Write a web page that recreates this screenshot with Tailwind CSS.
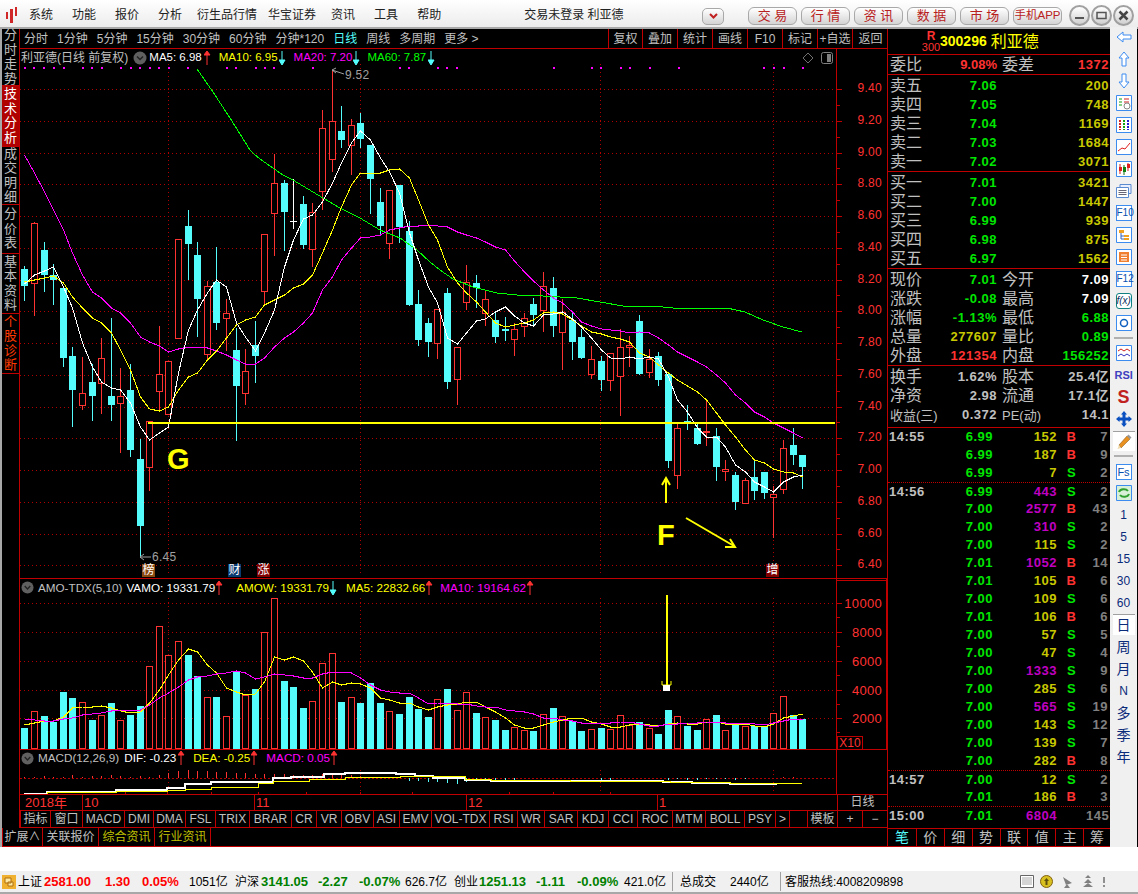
<!DOCTYPE html>
<html lang="en">

<head>
    <meta charset="UTF-8">
    <title>利亚德 300296</title>
    <script src="https://cdn.jsdelivr.net/npm/@tailwindcss/browser@4"></script>
</head>

<body class="w-[1138px] h-[894px] overflow-hidden bg-[#f0f0f0] flex flex-col text-[12px] [font-family:'Liberation_Sans','Noto_Sans_CJK_SC',sans-serif]">
    <svg class="hidden">
        <symbol id="up" viewBox="0 0 7 14"><path d="M3 14V4M3 0L0 4H6Z" stroke="#ff3232" fill="#ff3232" /></symbol>
        <symbol id="down" viewBox="0 0 7 14"><path d="M3 0V10M3 14L0 9H6Z" stroke="#54fcfc" fill="#54fcfc" /></symbol>
        <symbol id="drop" viewBox="0 0 14 14"><circle cx="7" cy="7" r="6.5" fill="#606060" /><path d="M4 5.5L7 8.5L10 5.5" stroke="#222" stroke-width="1.5" fill="none" /></symbol>
    </svg>

    <!-- title bar -->
    <header class="h-[29px] shrink-0 flex items-center pt-[3px] bg-linear-to-b from-white to-[#ececec] border-b-2 border-[#a8a8a8] text-[#222]">
        <svg class="ml-[5px] w-[13px] h-[16px]" viewBox="0 0 13 16">
            <path d="M1 5h2v7H1zM5 2h3v14H5zM10 0h2v9h-2z" fill="#d02828" />
        </svg>
        <span class="ml-[11px]">系统</span>
        <span class="ml-[19px]">功能</span>
        <span class="ml-[19px]">报价</span>
        <span class="ml-[19px]">分析</span>
        <span class="ml-[15px]">衍生品行情</span>
        <span class="ml-[11px]">华宝证券</span>
        <span class="ml-[15px]">资讯</span>
        <span class="ml-[19px]">工具</span>
        <span class="ml-[19px]">帮助</span>
        <span class="ml-[83px]">交易未登录 利亚德</span>
        <div class="ml-auto flex items-center pr-[4px]">
            <div class="mt-[2px] w-[22px] h-[17px] rounded-[5px] border border-[#a8a8a8] bg-linear-to-b from-white to-[#d4d4d4] flex items-center justify-center">
                <svg class="w-[9px] h-[6px]" viewBox="0 0 9 6"><path d="M1 1L4.500 4.500L8 1" stroke="#c02020" stroke-width="2" fill="none" /></svg>
            </div>
            <div class="mt-[2px] ml-[24px] flex gap-[4px] text-[#b82020] text-[13px]">
                <div class="w-[49px] h-[18px] rounded-[6px] border border-[#a8a8a8] bg-linear-to-b from-white to-[#d4d4d4] flex items-center justify-center">交 易</div>
                <div class="w-[49px] h-[18px] rounded-[6px] border border-[#a8a8a8] bg-linear-to-b from-white to-[#d4d4d4] flex items-center justify-center">行 情</div>
                <div class="w-[49px] h-[18px] rounded-[6px] border border-[#a8a8a8] bg-linear-to-b from-white to-[#d4d4d4] flex items-center justify-center">资 讯</div>
                <div class="w-[49px] h-[18px] rounded-[6px] border border-[#a8a8a8] bg-linear-to-b from-white to-[#d4d4d4] flex items-center justify-center">数 据</div>
                <div class="w-[49px] h-[18px] rounded-[6px] border border-[#a8a8a8] bg-linear-to-b from-white to-[#d4d4d4] flex items-center justify-center">市 场</div>
                <div class="w-[49px] h-[18px] rounded-[6px] border border-[#a8a8a8] bg-linear-to-b from-white to-[#d4d4d4] flex items-center justify-center text-[11.500px] whitespace-nowrap">手机APP</div>
            </div>
            <div class="ml-[7px] flex gap-px">
                <div class="w-[21px] h-[21px] rounded-full border-2 border-[#a0a0a0] bg-linear-to-b from-white to-[#d0d0d0] flex items-center justify-center">
                    <svg class="w-[11px] h-[11px]" viewBox="0 0 11 11"><path d="M1 8h9" stroke="#555" stroke-width="2" /></svg>
                </div>
                <div class="w-[21px] h-[21px] rounded-full border-2 border-[#a0a0a0] bg-linear-to-b from-white to-[#d0d0d0] flex items-center justify-center">
                    <svg class="w-[11px] h-[11px]" viewBox="0 0 11 11"><path d="M1 2.500h9v6h-9z" stroke="#555" stroke-width="1.500" fill="none" /></svg>
                </div>
                <div class="w-[21px] h-[21px] rounded-full border-2 border-[#a0a0a0] bg-linear-to-b from-white to-[#d0d0d0] flex items-center justify-center">
                    <svg class="w-[11px] h-[11px]" viewBox="0 0 11 11"><path d="M1.500 1.500l8 8M9.500 1.500l-8 8" stroke="#444" stroke-width="2.500" /></svg>
                </div>
            </div>
        </div>
    </header>

    <div class="h-[818px] shrink-0 flex bg-black">
        <div class="w-[888px] ml-0 flex flex-col border-l-2 border-[#a8a8a8]">
            <div class="h-[799px] flex">
                <!-- vertical tabs -->
                <nav class="w-[18px] shrink-0 flex flex-col border-r border-[#c00000] text-[#c0c0c0] text-[13px] leading-[14.5px]">
                    <div class="h-[57px] border-b border-[#c00000] flex items-center justify-center"><span class="w-[13px] break-all">分时走势</span></div>
                    <div class="h-[61px] border-b border-[#c00000] bg-[#b00000] text-white flex items-center justify-center"><span class="w-[13px] break-all">技术分析</span></div>
                    <div class="h-[58px] border-b border-[#c00000] flex items-center justify-center"><span class="w-[13px] break-all">成交明细</span></div>
                    <div class="h-[49px] border-b border-[#c00000] flex items-center justify-center"><span class="w-[13px] break-all">分价表</span></div>
                    <div class="h-[60px] border-b border-[#c00000] flex items-center justify-center"><span class="w-[13px] break-all">基本资料</span></div>
                    <div class="h-[60px] border-b border-[#c00000] text-[#ff3a00] flex items-center justify-center"><span class="w-[13px] break-all">个股诊断</span></div>
                </nav>

                <main class="w-[868px] flex flex-col">
                    <!-- period toolbar -->
                    <div class="h-[20px] shrink-0 flex items-center border-b border-[#c00000] text-[#c0c0c0]">
                        <div class="flex items-center gap-[9px] pl-[4px]">
                            <span>分时</span><span>1分钟</span><span>5分钟</span><span>15分钟</span><span>30分钟</span><span>60分钟</span><span>分钟*120</span>
                            <span class="text-[#54fcfc]">日线</span><span>周线</span><span>多周期</span><span>更多 &gt;</span>
                        </div>
                        <div class="ml-auto flex h-full">
                            <span class="w-[34px] border-l border-[#c00000] flex items-center justify-center">复权</span>
                            <span class="w-[35px] border-l border-[#c00000] flex items-center justify-center">叠加</span>
                            <span class="w-[35px] border-l border-[#c00000] flex items-center justify-center">统计</span>
                            <span class="w-[35px] border-l border-[#c00000] flex items-center justify-center">画线</span>
                            <span class="w-[35px] border-l border-[#c00000] flex items-center justify-center">F10</span>
                            <span class="w-[35px] border-l border-[#c00000] flex items-center justify-center">标记</span>
                            <span class="w-[35px] border-l border-[#c00000] flex items-center justify-center">+自选</span>
                            <span class="w-[36px] border-l border-[#c00000] flex items-center justify-center">返回</span>
                        </div>
                    </div>

                    <!-- main chart -->
                    <section class="relative h-[530px] shrink-0">
                        <svg id="kline" class="block" width="868" height="530" viewBox="20 49 868 530"></svg>
                        <div class="absolute left-px top-0 h-[17px] flex items-center text-[#c0c0c0]">
                            <span>利亚德(日线 前复权)</span>
                            <svg class="ml-[5px] w-[14px] h-[14px]"><use href="#drop" /></svg>
                            <span class="ml-[2px] text-[11.500px] text-white">MA5: 6.98</span><svg class="ml-[2px] w-[7px] h-[14px]"><use href="#up" /></svg>
                            <span class="ml-[8px] text-[11.500px] text-[#ffff00]">MA10: 6.95</span><svg class="ml-[1px] w-[7px] h-[14px]"><use href="#down" /></svg>
                            <span class="ml-[8px] text-[11.500px] text-[#ff00ff]">MA20: 7.20</span><svg class="ml-[1px] w-[7px] h-[14px]"><use href="#down" /></svg>
                            <span class="ml-[7px] text-[11.500px] text-[#00ff00]">MA60: 7.87</span><svg class="ml-[2px] w-[7px] h-[14px]"><use href="#down" /></svg>
                        </div>
                        <span class="absolute left-[147px] top-[393px] font-bold text-[#ffff00] text-[29px] leading-[34px]">G</span>
                        <span class="absolute left-[637px] top-[469px] font-bold text-[#ffff00] text-[29px] leading-[34px]">F</span>
                        <span class="absolute left-[122px] top-[515px] w-[13px] h-[13px] bg-[#8a4a10] text-white text-[12px] leading-[13px] text-center">榜</span>
                        <span class="absolute left-[208px] top-[515px] w-[13px] h-[13px] bg-[#0a3a70] text-white text-[12px] leading-[13px] text-center">财</span>
                        <span class="absolute left-[237px] top-[515px] w-[13px] h-[13px] bg-[#800000] text-white text-[12px] leading-[13px] text-center">涨</span>
                        <span class="absolute left-[746px] top-[515px] w-[13px] h-[13px] bg-[#800000] text-white text-[12px] leading-[13px] text-center">增</span>
                    </section>

                    <!-- amount panel -->
                    <section class="relative h-[171px] shrink-0">
                        <svg id="amo" class="block" width="868" height="171" viewBox="20 579 868 171"></svg>
                        <div class="absolute left-0 top-0 h-[17px] pl-[1px] flex items-center text-[11.700px] text-[#c0c0c0]">
                            <svg class="w-[13px] h-[13px]"><use href="#drop" /></svg>
                            <span class="ml-[4px]">AMO-TDX(5,10)</span>
                            <span class="ml-[4px] text-white">VAMO: 19331.79</span><svg class="ml-[1px] w-[7px] h-[14px]"><use href="#up" /></svg>
                            <span class="ml-[13px] text-[#ffff00]">AMOW: 19331.79</span><svg class="ml-[1px] w-[7px] h-[14px]"><use href="#down" /></svg>
                            <span class="ml-[9px] text-[#ffff00]">MA5: 22832.66</span><svg class="ml-[1px] w-[7px] h-[14px]"><use href="#up" /></svg>
                            <span class="ml-[7px] text-[#ff00ff]">MA10: 19164.62</span><svg class="ml-[1px] w-[7px] h-[14px]"><use href="#up" /></svg>
                        </div>
                        <span class="absolute left-[817px] top-[157px] w-[26px] h-[14px] border border-[#c00000] text-[#ff3232] leading-[12px] text-center">X10</span>
                    </section>

                    <!-- macd panel -->
                    <section class="relative h-[45px] shrink-0">
                        <svg id="macd" class="block" width="868" height="45" viewBox="20 750 868 45"></svg>
                        <div class="absolute left-0 top-0 h-[16px] pl-[1px] flex items-center text-[11.700px] text-[#c0c0c0]">
                            <svg class="w-[13px] h-[13px]"><use href="#drop" /></svg>
                            <span class="ml-[4px]">MACD(12,26,9)</span>
                            <span class="ml-[5px] text-white">DIF: -0.23</span><svg class="ml-[2px] w-[7px] h-[14px]"><use href="#up" /></svg>
                            <span class="ml-[8px] text-[#ffff00]">DEA: -0.25</span><svg class="ml-[1px] w-[7px] h-[14px]"><use href="#up" /></svg>
                            <span class="ml-[8px] text-[#ff00ff]">MACD: 0.05</span><svg class="ml-[1px] w-[7px] h-[14px]"><use href="#up" /></svg>
                        </div>
                    </section>

                    <!-- date axis -->
                    <div class="h-[16px] shrink-0 flex border-b border-[#c00000] text-[#ff3232] text-[13px] leading-[15px]">
                        <span class="w-[62px] pl-[5px]">2018年</span>
                        <span class="w-[172px] border-l border-[#c00000] pl-[1px]">10</span>
                        <span class="w-[212px] border-l border-[#c00000] pl-[1px]">11</span>
                        <span class="w-[191px] border-l border-[#c00000] pl-[1px]">12</span>
                        <span class="w-[180px] border-l border-[#c00000] pl-[1px]">1</span>
                        <span class="w-[50px] border-l border-[#c00000] text-center text-[#c0c0c0] text-[12px]">日线</span>
                    </div>

                    <!-- indicator tabs -->
                    <div class="h-[17px] shrink-0 flex border-b border-[#c00000] text-[#c0c0c0] leading-[16px] text-center">
                        <span class="w-[30px] border-l border-[#c00000]">指标</span>
                        <span class="w-[32px] border-l border-[#c00000]">窗口</span>
                        <span class="w-[42px] border-l border-[#c00000]">MACD</span>
                        <span class="w-[29px] border-l border-[#c00000]">DMI</span>
                        <span class="w-[32px] border-l border-[#c00000]">DMA</span>
                        <span class="w-[30px] border-l border-[#c00000]">FSL</span>
                        <span class="w-[34px] border-l border-[#c00000]">TRIX</span>
                        <span class="w-[42px] border-l border-[#c00000]">BRAR</span>
                        <span class="w-[25px] border-l border-[#c00000]">CR</span>
                        <span class="w-[25px] border-l border-[#c00000]">VR</span>
                        <span class="w-[32px] border-l border-[#c00000]">OBV</span>
                        <span class="w-[26px] border-l border-[#c00000]">ASI</span>
                        <span class="w-[32px] border-l border-[#c00000]">EMV</span>
                        <span class="w-[58px] border-l border-[#c00000]">VOL-TDX</span>
                        <span class="w-[28px] border-l border-[#c00000]">RSI</span>
                        <span class="w-[27px] border-l border-[#c00000]">WR</span>
                        <span class="w-[33px] border-l border-[#c00000]">SAR</span>
                        <span class="w-[31px] border-l border-[#c00000]">KDJ</span>
                        <span class="w-[29px] border-l border-[#c00000]">CCI</span>
                        <span class="w-[35px] border-l border-[#c00000]">ROC</span>
                        <span class="w-[33px] border-l border-[#c00000]">MTM</span>
                        <span class="w-[39px] border-l border-[#c00000]">BOLL</span>
                        <span class="w-[31px] border-l border-[#c00000]">PSY</span>
                        <span class="w-[14px] border-l border-[#c00000]">&gt;</span>
                        <span class="w-[18px] border-l border-[#c00000]"></span>
                        <span class="w-[30px] border-l border-[#c00000]">模板</span>
                        <span class="w-[25px] border-l border-[#c00000]">+</span>
                        <span class="w-[26px] border-x border-[#c00000]">−</span>
                    </div>
                </main>
            </div>

            <!-- bottom tabs -->
            <div class="h-[19px] flex border-y-0 border-b border-[#c00000] text-[#c0c0c0] leading-[18px] text-center">
                <span class="w-[41px] border-x border-[#c00000]">扩展∧</span>
                <span class="w-[56px] border-r border-[#c00000]">关联报价</span>
                <span class="w-[56px] border-r border-[#c00000] text-[#c0c000]">综合资讯</span>
                <span class="w-[56px] border-r border-[#c00000] text-[#c0c000]">行业资讯</span>
            </div>
        </div>

        <!-- quote panel -->
        <aside class="w-[223px] shrink-0 flex flex-col border-l border-[#c00000] -ml-px text-[#c0c0c0]">
            <div class="h-[26px] shrink-0 flex items-center border-b border-[#c00000] text-[#ffff00]">
                <div class="ml-[35px] w-[16px] flex flex-col items-center text-[#ff3232] leading-[11px]">
                    <b class="text-[12px]">R</b><span class="text-[11px]">300</span>
                </div>
                <b class="ml-[1px] text-[14px]">300296</b>
                <span class="ml-[4px] text-[16px]">利亚德</span>
            </div>
            <div class="h-[20px] shrink-0 flex items-center border-b border-[#c00000] pl-[2px] text-[16px]">
                <span class="w-[32px] shrink-0 whitespace-nowrap">委比</span>
                <b class="w-[75px] shrink-0 text-right text-[13px] text-[#ff3232]">9.08%</b>
                <span class="ml-[5px] w-[32px] shrink-0 whitespace-nowrap">委差</span>
                <b class="w-[75px] shrink-0 text-right text-[13px] text-[#ff3232] tracking-[.5px]">1372</b>
            </div>
            <div id="book" class="contents"></div>
            <div id="ticks" class="h-[400px] shrink-0 flex flex-col"></div>
            <div class="h-[19px] shrink-0 flex border-y border-[#c00000] text-[14px] leading-[16px] text-center">
                <span class="w-[28px] text-[#54fcfc]">笔</span>
                <span class="w-[28px] border-l border-[#c00000]">价</span>
                <span class="w-[28px] border-l border-[#c00000]">细</span>
                <span class="w-[28px] border-l border-[#c00000]">势</span>
                <span class="w-[28px] border-l border-[#c00000]">联</span>
                <span class="w-[28px] border-l border-[#c00000]">值</span>
                <span class="w-[28px] border-l border-[#c00000]">主</span>
                <span class="w-[27px] border-l border-[#c00000]">筹</span>
            </div>
        </aside>

        <!-- tool strip -->
        <div class="w-[27px] shrink-0 -mt-[2px] bg-[#f0f0f0] flex flex-col items-center pt-[2px] text-[#0a2a7a]">
            <div class="flex flex-col items-center gap-[6px]">
                <svg class="w-[16px] h-[16px]" viewBox="0 0 16 16"><path d="M1 8L7 3V6H15V10H7V13Z" fill="#fff" stroke="#3c8cf0" /></svg>
                <svg class="w-[16px] h-[16px]" viewBox="0 0 16 16"><path d="M8 1L13 7H10V15H6V7H3Z" fill="#fff" stroke="#3c8cf0" /></svg>
                <svg class="w-[16px] h-[16px]" viewBox="0 0 16 16"><path d="M8 15L13 9H10V1H6V9H3Z" fill="#fff" stroke="#3c8cf0" /></svg>
                <svg class="w-[16px] h-[16px]" viewBox="0 0 16 16"><path d="M.500.500h15v15H.500z" fill="#fff" stroke="#3c8cf0" /><path d="M3 4h3M3 7h3M3 10h3" stroke="#10a010" /><path d="M8 4h5M8 7h5" stroke="#d02020" /><circle cx="11" cy="11" r="3" fill="#fff" stroke="#888" /></svg>
                <svg class="w-[16px] h-[16px]" viewBox="0 0 16 16"><path d="M.500.500h15v15H.500z" fill="#fff" stroke="#3c8cf0" /><path d="M4 3v10" stroke="#d02020" stroke-width="2" stroke-dasharray="2 1" /><path d="M8 3v10" stroke="#10a010" stroke-width="2" stroke-dasharray="2 1" /><path d="M12 3v10" stroke="#2020d0" stroke-width="2" stroke-dasharray="2 1" /></svg>
                <svg class="w-[16px] h-[16px]" viewBox="0 0 16 16"><path d="M.500.500h15v15H.500z" fill="#fff" stroke="#3c8cf0" /><path d="M2 12L6 9L9 10L14 4" stroke="#e02020" fill="none" /></svg>
                <svg class="w-[16px] h-[16px]" viewBox="0 0 16 16"><path d="M.500.500h15v15H.500z" fill="#fff" stroke="#3c8cf0" /><path d="M4 3v10M12 2v8" stroke="#d02020" /><path d="M3 6h3v4H3zM11 3h3v4h-3z" fill="#e02020" /><path d="M8 4v10" stroke="#107010" /><path d="M7 6h3v5H7z" fill="#108010" /></svg>
                <svg class="w-[16px] h-[16px]" viewBox="0 0 16 16"><path d="M4 1.500h11v9H4z" fill="#e8f0ff" stroke="#5a8ad0" /><path d="M.500 4.500h12v10H.500z" fill="#fff" stroke="#5a8ad0" /><path d="M2.500 7.500h8M2.500 9.500h8M2.500 11.500h8" stroke="#667" /></svg>
                <div class="w-[16px] h-[16px] border border-[#3c8cf0] bg-white text-[#0a50b0] text-[10px] leading-[14px] text-center">F10</div>
                <svg class="w-[16px] h-[16px]" viewBox="0 0 16 16"><path d="M.500.500h15v15H.500z" fill="#fff" stroke="#3c8cf0" /><path d="M3 3h5v3H3zM8 8h5v2H8zM8 11h5v2H8z" fill="#f0a020" /><path d="M5 6v6h3M5 9h3" stroke="#3060c0" fill="none" /></svg>
                <svg class="w-[16px] h-[16px]" viewBox="0 0 16 16"><path d="M.500.500h15v15H.500z" fill="#fff" stroke="#3c8cf0" /><path d="M3 3h10v10H3z" fill="#f08030" /><path d="M5 6h6M5 8.500h6M5 11h6" stroke="#fff" /></svg>
                <div class="w-[16px] h-[16px] border border-[#3c8cf0] bg-white text-[#0a50b0] text-[10px] leading-[14px] text-center">F12</div>
                <div class="w-[16px] h-[16px] rounded-[3px] border border-[#108080] bg-white text-[#0a3060] text-[10px] leading-[14px] text-center italic">f(x)</div>
                <svg class="w-[16px] h-[16px]" viewBox="0 0 16 16"><path d="M.500.500h15v15H.500z" fill="#fff" stroke="#3c8cf0" /><circle cx="8" cy="8" r="3.500" fill="none" stroke="#1060c0" stroke-width="1.500" /></svg>
            </div>
            <div class="my-[6px] w-[19px] h-[2px] bg-[#b0b0b0]"></div>
            <div class="flex flex-col items-center gap-[6px]">
                <svg class="w-[16px] h-[16px]" viewBox="0 0 16 16"><path d="M.500.500h15v15H.500z" fill="#fff" stroke="#3c8cf0" /><path d="M2 6L5 4L8 6L11 4L14 6" stroke="#d02020" fill="none" /><path d="M2 11L5 9L8 11L11 9L14 11" stroke="#3030c0" fill="none" /></svg>
                <div class="w-[18px] h-[16px] text-[#4040c0] font-bold text-[11px] leading-[16px] text-center">RSI</div>
                <div class="w-[16px] h-[16px] text-[#c02020] font-bold text-[18px] leading-[16px] text-center">S</div>
                <svg class="w-[16px] h-[16px]" viewBox="0 0 16 16"><path d="M8 0L11 3.500H9.500V6.500H12.500V5L16 8L12.500 11V9.500H9.500V12.500H11L8 16L5 12.500H6.500V9.500H3.500V11L0 8L3.500 5V6.500H6.500V3.500H5Z" fill="#0a50c0" /></svg>
            </div>
            <div class="mt-[4px] w-[22px] h-[20px] bg-white border-t border-[#a0a0a0] flex items-center justify-center">
                <svg class="w-[16px] h-[16px]" viewBox="0 0 16 16"><path d="M3 11L11 2L14 5L5 14Z" fill="#e89020" stroke="#805010" stroke-width=".5" /><path d="M3 11L1.500 15L5 14Z" fill="#f0d8a8" /><path d="M11 2L12.500 .5L15.500 3.500L14 5Z" fill="#999" /></svg>
            </div>
            <div class="mt-[4px] w-[19px] h-[2px] bg-[#b0b0b0]"></div>
            <div class="mt-[7px] w-[16px] h-[16px] border border-[#3c8cf0] bg-white text-[#0a50b0] text-[11px] leading-[14px] text-center">Fs</div>
            <svg class="mt-[5px] w-[16px] h-[16px]" viewBox="0 0 16 16"><path d="M.500.500h15v15H.500z" fill="#d8f0d8" stroke="#3c8cf0" /><path d="M3 7a5 4 0 0 1 9-1M13 9a5 4 0 0 1-9 1" stroke="#30a030" stroke-width="2" fill="none" /></svg>
            <div class="mt-[6px] flex flex-col items-center">
                <span class="h-[22px] leading-[16px]">1</span>
                <span class="h-[22px] leading-[16px]">5</span>
                <span class="h-[22px] leading-[16px]">15</span>
                <span class="h-[22px] leading-[16px]">30</span>
                <span class="h-[22px] leading-[16px]">60</span>
            </div>
            <div class="-mt-[3px] w-[22px] h-[21px] bg-white border-t border-[#a0a0a0] text-center text-[14px] leading-[20px]">日</div>
            <div class="mt-[2px] flex flex-col items-center text-[14px]">
                <span class="h-[22px] leading-[20px]">周</span>
                <span class="h-[22px] leading-[20px]">月</span>
                <span class="h-[22px] leading-[20px] text-[12px]">N</span>
                <span class="h-[22px] leading-[20px]">多</span>
                <span class="h-[22px] leading-[20px]">季</span>
                <span class="h-[22px] leading-[20px]">年</span>
            </div>
        </div>
    </div>

    <div class="h-[24px] shrink-0 bg-white"></div>

    <!-- status bar -->
    <footer class="h-[23px] shrink-0 flex items-center border-b-2 border-[#a8a8a8] bg-[#f0f0f0] text-black">
        <svg class="ml-[2px] w-[14px] h-[14px]" viewBox="0 0 14 14"><path d="M0 0h14v14H0z" fill="#f0b030" /><path d="M3 3h6v5H3zM6 7h5v4H6z" fill="#ffe8a0" stroke="#b07010" /></svg>
        <span class="ml-[2px] w-[26px]">上证</span>
        <b class="w-[61px] text-[13px] text-[#ff0000]">2581.00</b>
        <b class="w-[37px] text-[13px] text-[#ff0000]">1.30</b>
        <b class="w-[47px] text-[13px] text-[#ff0000]">0.05%</b>
        <span class="w-[46px]">1051亿</span>
        <span class="w-[26px]">沪深</span>
        <b class="w-[57px] text-[13px] text-[#008000]">3141.05</b>
        <b class="w-[41px] text-[13px] text-[#008000]">-2.27</b>
        <b class="w-[46px] text-[13px] text-[#008000]">-0.07%</b>
        <span class="w-[49px]">626.7亿</span>
        <span class="w-[25px]">创业</span>
        <b class="w-[57px] text-[13px] text-[#008000]">1251.13</b>
        <b class="w-[41px] text-[13px] text-[#008000]">-1.11</b>
        <b class="w-[47px] text-[13px] text-[#008000]">-0.09%</b>
        <span class="w-[48px]">421.0亿</span>
        <span class="w-[8px] h-[19px] border-l border-[#a0a0a0]"></span>
        <span class="w-[50px]">总成交</span>
        <span class="w-[50px]">2440亿</span>
        <span class="w-[5px] h-[19px] border-l border-[#a0a0a0]"></span>
        <span class="whitespace-nowrap">客服热线:4008209898</span>
        <div class="ml-auto mr-[32px] flex items-center gap-[6px]">
            <svg class="w-[14px] h-[13px]" viewBox="0 0 14 13"><path d="M.500.500h13v12H.500z" fill="#fff" stroke="#666" /><path d="M2 3h10M2 5h10M2 7h10M2 9h10" stroke="#aaa" /></svg>
            <svg class="w-[13px] h-[13px]" viewBox="0 0 13 13"><circle cx="6.500" cy="6.500" r="6" fill="#d8c020" stroke="#806010" /><path d="M6.500 3L9 6H7.500V10H5.500V6H4Z" fill="#605010" /></svg>
            <svg class="ml-[3px] w-[12px] h-[13px]" viewBox="0 0 12 13"><path d="M1 2L10 8L4 10ZM5 9L2 13H8Z" fill="#808080" /></svg>
            <svg class="ml-[3px] w-[10px] h-[13px]" viewBox="0 0 10 13"><path d="M5 0L8 3H2ZM5 4L9 8H1ZM5 8L10 12H0Z" fill="#808080" /></svg>
            <svg class="ml-[3px] w-[4px] h-[10px]" viewBox="0 0 4 10"><path d="M1 0h2v6H1zM1 8h2v2H1z" fill="#909090" /></svg>
        </div>
    </footer>

    <script>
        const RED = '#ff3232', CYAN = '#54fcfc', DOT = '#b00000', LINE = '#c00000';
        const X = i => Math.round(24.3 + 9.605 * i);

        // [wick top, body top, body bottom, wick bottom, up?]  in screen pixels
        const candles = [
            [266, 269, 286, 300, 0], [222, 223, 283, 315, 1], [242, 250, 275, 291, 0], [264, 275, 280, 304, 0], [288, 288, 358, 366, 0], [347, 356, 390, 426, 0],
            [357, 393, 405, 409, 1], [364, 382, 396, 420, 0], [338, 358, 383, 413, 1], [318, 396, 405, 420, 0], [368, 396, 403, 452, 1], [364, 390, 450, 456, 0],
            [439, 459, 526, 557, 0], [421, 421, 467, 490, 1], [326, 374, 391, 410, 1], [361, 361, 414, 414, 1], [239, 239, 338, 338, 1], [210, 226, 244, 279, 0],
            [242, 255, 299, 336, 0], [281, 286, 354, 360, 1], [247, 282, 323, 329, 0], [299, 313, 318, 350, 1], [328, 350, 386, 440, 0], [349, 371, 393, 404, 1],
            [321, 345, 356, 382, 0], [234, 234, 291, 305, 1], [154, 183, 213, 255, 1], [180, 183, 212, 250, 0], [179, 221, 221, 228, 2], [196, 204, 245, 248, 0],
            [203, 212, 249, 266, 1], [110, 128, 191, 209, 1], [70, 121, 159, 171, 1], [106, 131, 140, 147, 0], [119, 125, 145, 174, 1], [113, 123, 139, 147, 0],
            [145, 145, 179, 213, 0], [188, 202, 226, 234, 0], [190, 190, 243, 258, 1], [185, 185, 227, 242, 0], [221, 231, 305, 305, 0], [290, 304, 340, 345, 0],
            [318, 323, 342, 356, 0], [309, 309, 343, 358, 1], [288, 293, 382, 388, 0], [347, 347, 379, 404, 1], [265, 282, 302, 309, 1], [275, 283, 288, 307, 0],
            [290, 299, 313, 325, 1], [311, 320, 337, 342, 0], [317, 329, 331, 340, 0], [323, 329, 339, 355, 1], [313, 318, 326, 336, 1], [298, 304, 315, 325, 0],
            [272, 286, 310, 331, 1], [277, 288, 326, 336, 0], [299, 312, 332, 369, 1], [312, 320, 342, 359, 0], [329, 337, 358, 358, 0], [346, 359, 374, 378, 1],
            [356, 361, 380, 390, 0], [353, 353, 380, 390, 1], [329, 347, 376, 415, 1], [336, 345, 347, 366, 1], [315, 321, 374, 374, 0], [349, 359, 372, 377, 1],
            [352, 356, 380, 385, 0], [374, 374, 461, 467, 0], [422, 428, 475, 488, 1], [405, 421, 423, 429, 0], [422, 428, 444, 444, 0], [399, 431, 433, 445, 3],
            [428, 436, 467, 480, 0], [460, 469, 471, 480, 1], [472, 475, 502, 509, 0], [478, 480, 503, 503, 1], [460, 477, 491, 499, 0], [472, 472, 493, 498, 0],
            [486, 494, 497, 537, 1], [440, 448, 489, 493, 1], [428, 445, 455, 464, 0], [455, 455, 467, 488, 0]
        ];
        const ma5 = [284, 275, 271, 267, 287, 308, 343, 367, 382, 388, 390, 403, 427, 440, 433, 427, 373, 330, 310, 293, 280, 287, 323, 337, 351, 333, 310, 267, 240, 219, 215, 202, 183, 163, 143, 131, 140, 158, 172, 193, 233, 260, 287, 303, 338, 344, 333, 321, 319, 312, 307, 316, 323, 326, 315, 314, 312, 319, 327, 338, 350, 358, 359, 357, 359, 357, 359, 377, 400, 412, 428, 437, 437, 447, 465, 472, 482, 487, 492, 482, 477, 475];
        const ma10 = [282, 280, 278, 276, 283, 297, 308, 318, 323, 333, 350, 370, 397, 409, 411, 407, 390, 377, 373, 360, 351, 338, 325, 320, 317, 305, 300, 295, 288, 284, 275, 253, 230, 207, 185, 173, 173, 173, 170, 169, 178, 200, 225, 240, 267, 283, 293, 302, 312, 323, 327, 325, 323, 320, 313, 312, 314, 320, 326, 332, 334, 337, 339, 342, 353, 357, 365, 373, 380, 386, 392, 400, 413, 425, 437, 450, 460, 463, 469, 472, 473, 477];
        const ma20 = [155, 173, 192, 210, 230, 253, 275, 292, 298, 308, 313, 323, 337, 342, 346, 352, 349, 347, 347, 348, 351, 355, 360, 364, 364, 358, 347, 338, 332, 323, 313, 290, 277, 260, 248, 238, 237, 235, 230, 228, 226, 226, 225, 226, 227, 232, 235, 238, 242, 247, 250, 261, 272, 281, 290, 298, 303, 312, 322, 326, 329, 330, 331, 333, 332, 333, 338, 345, 352, 357, 362, 367, 375, 383, 395, 403, 412, 417, 423, 428, 433, 438];
        const ma60 = [[197, 69], [213, 92], [230, 118], [250, 150], [255, 155], [267, 164], [283, 175], [293, 180], [313, 192], [323, 198], [340, 208], [360, 218], [380, 230], [400, 238], [417, 250], [430, 262], [440, 270], [453, 279], [473, 287], [497, 293], [517, 295], [543, 296], [577, 298], [600, 302], [623, 306], [653, 306], [673, 308], [700, 309], [727, 308], [745, 312], [763, 320], [783, 327], [802, 332]];

        const volTop = [728, 711, 716, 722, 692, 698, 702, 720, 715, 703, 720, 715, 706, 666, 626, 655, 641, 655, 676, 697, 697, 716, 672, 695, 689, 632, 598, 681, 687, 708, 701, 663, 653, 702, 697, 703, 683, 703, 711, 714, 697, 709, 717, 699, 689, 710, 692, 713, 717, 720, 730, 727, 730, 731, 714, 708, 716, 721, 731, 729, 728, 729, 715, 725, 722, 728, 734, 710, 716, 726, 730, 719, 715, 730, 725, 726, 726, 727, 713, 696, 715, 719];
        const volUp = [0, 1, 0, 0, 0, 0, 1, 0, 1, 0, 1, 0, 0, 1, 1, 1, 1, 0, 0, 1, 0, 1, 0, 1, 0, 1, 1, 0, 0, 0, 1, 1, 1, 0, 1, 0, 0, 0, 1, 0, 0, 0, 0, 1, 0, 1, 1, 0, 1, 0, 0, 1, 1, 0, 1, 0, 1, 0, 0, 1, 0, 1, 1, 1, 0, 1, 0, 0, 1, 0, 0, 1, 0, 1, 0, 1, 0, 0, 1, 1, 0, 0];
        const volMa5 = [725, 723, 721, 721, 717, 708, 707, 707, 706, 708, 711, 713, 712, 703, 690, 675, 660, 649, 652, 665, 673, 688, 692, 695, 694, 682, 657, 660, 657, 661, 672, 688, 682, 685, 683, 684, 688, 698, 700, 703, 703, 707, 710, 707, 705, 704, 702, 702, 707, 712, 718, 725, 728, 728, 725, 722, 720, 718, 718, 722, 724, 727, 727, 725, 724, 725, 726, 724, 723, 724, 724, 722, 722, 724, 724, 724, 726, 727, 724, 718, 716, 714];
        const volMa10 = [719, 720, 721, 721, 719, 718, 715, 714, 713, 711, 710, 710, 710, 705, 698, 693, 687, 680, 677, 676, 674, 673, 671, 673, 679, 677, 674, 675, 676, 678, 678, 674, 672, 672, 673, 678, 685, 690, 692, 693, 693, 698, 704, 703, 703, 704, 704, 706, 707, 707, 710, 711, 712, 714, 718, 718, 720, 721, 723, 723, 723, 723, 722, 722, 724, 726, 726, 724, 724, 723, 723, 722, 722, 723, 723, 723, 724, 725, 723, 721, 719, 719];

        const macdWhite = [[24, 794], [47, 792], [116, 790], [153, 790], [167, 788], [185, 784], [211, 782], [258, 782], [273, 778], [291, 777], [324, 774], [345, 773], [375, 773], [396, 774], [415, 776], [433, 778], [465, 780], [491, 781], [538, 781], [597, 781], [663, 782], [692, 783], [730, 784], [777, 784]];
        const macdYellow = [[24, 794], [47, 792], [116, 791], [153, 791], [167, 790], [185, 789], [211, 787], [258, 783], [273, 781], [309, 779], [345, 777], [400, 776], [433, 776], [465, 779], [491, 780], [570, 781], [670, 782], [730, 783], [802, 783]];
        const macdBars = [1, 1, 2, 1, 1, 3, 1, 2, 2, 3, 2, 1, 2, 1, 3, 5, 7, 8, 7, 7, 6, 6, 5, 5, 4, 4, 4, 4, 3, 3, 3, 4, 4, 3, 3, 2, 1, 0, 0, 0, -3, -3, -4, -4, -5, -6, -4, -3, -3, -2, -2, -2, 0, 0, 0, 0, 0, 0, 0, 0, -2, -2, 0, 0, 0, 0, 0, -2, -1, -2, -2, -1, -1, -1, -2, -1, 0, 0, 0, 1, 1, 0];

        const line = (x1, y1, x2, y2, c, extra = '') => `<line x1="${x1}" y1="${y1}" x2="${x2}" y2="${y2}" stroke="${c}" shape-rendering="crispEdges" ${extra}/>`;
        const poly = (pts, c, w = 1) => `<polyline points="${pts.map(p => p.join(',')).join(' ')}" fill="none" stroke="${c}" stroke-width="${w}" shape-rendering="crispEdges"/>`;
        const series = arr => arr.map((y, i) => [X(i) + .5, y]);
        const label = (x, y, t, c = RED, size = 12) => `<text x="${x}" y="${y}" fill="${c}" font-size="${size}" text-anchor="end" letter-spacing=".3">${t}</text>`;
        const vgrid = (y1, y2) => [168.5, 360.5, 600.5, 773.5].map(x => line(x, y1, x, y2, DOT, 'stroke-dasharray="1 3"')).join('');

        // main panel
        let s = '';
        for (let k = 0; k < 16; k++) {
            const y = Math.round(89 + 31.75 * k);
            s += line(20, y + .5, 836, y + .5, DOT, 'stroke-dasharray="1 3"');
            s += label(882, y + 3, (9.4 - k * .2).toFixed(2));
        }
        s += vgrid(64, 576);
        for (let k = 0; k < 31; k++) {
            const y = Math.round(89 + 15.875 * k) + .5;
            s += line(837, y, k % 2 ? 840 : 842, y, LINE);
        }
        [24, 33, 43, 53, 63, 82, 91, 101, 120, 130, 139, 149, 158, 168, 187, 226, 235, 255, 264, 273, 312, 399, 408, 437, 446, 456, 553, 591, 600, 620, 629, 649, 678, 763, 773, 783, 802].forEach(x => {
            s += `<rect x="${x}" y="67" width="2" height="2" fill="#ff00ff"/>`;
        });
        s += `<path d="M808 53L813 58L808 63L803 58Z" fill="none" stroke="#707070"/><rect x="821.500" y="52.500" width="11" height="11" rx="2" fill="none" stroke="#808080"/><rect x="827" y="54" width="4" height="8" fill="#808080"/>`;
        candles.forEach((c, i) => {
            const x = X(i), col = c[4] === 1 || c[4] === 3 ? RED : c[4] === 2 ? '#ffffff' : CYAN;
            s += line(x + .5, c[0], x + .5, c[3] + 1, col);
            if (c[4] === 1) s += `<rect x="${x - 2.5}" y="${c[1] + .5}" width="6" height="${c[2] - c[1]}" fill="#000" stroke="${RED}" shape-rendering="crispEdges"/>`;
            else if (c[4] === 2) s += line(x - 3, c[1] + .5, x + 4, c[1] + .5, col);
            else s += `<rect x="${x - 3}" y="${c[1]}" width="7" height="${Math.max(c[2] - c[1], 1)}" fill="${col}" shape-rendering="crispEdges"/>`;
        });
        s += poly(ma60, '#00ff00') + poly(series(ma20), '#ff00ff') + poly(series(ma10), '#ffff00') + poly(series(ma5), '#ffffff');
        s += line(148, 423, 835, 423, '#ffff00', 'stroke-width="2"');
        s += `<path d="M666 503V479M662 485L666 478L670 485" fill="none" stroke="#ffff00" stroke-width="2"/>`;
        s += `<path d="M686 518L734 546M725 547H735L730 539" fill="none" stroke="#ffff00" stroke-width="2"/>`;
        s += `<path d="M332 70L344 74M332 70L336 68M332 70L336 73" fill="none" stroke="#a0a0a0"/>` + `<text x="345" y="79" fill="#a0a0a0" font-size="12" letter-spacing=".3">9.52</text>`;
        s += `<path d="M140 557H151M140 557L144 554M140 557L144 560" fill="none" stroke="#a0a0a0"/>` + `<text x="152" y="561" fill="#a0a0a0" font-size="12" letter-spacing=".3">6.45</text>`;
        s += line(20, 578.5, 888, 578.5, LINE) + line(836.5, 49, 836.5, 579, LINE) + line(887.5, 49, 887.5, 579, LINE);
        document.getElementById('kline').innerHTML = s;

        // amount panel
        s = '';
        [603, 632, 661, 690, 718].forEach((y, k) => {
            s += line(20, y + .5, 836, y + .5, DOT, 'stroke-dasharray="1 3"');
            s += label(882, y + 5, [10000, 8000, 6000, 4000, 2000][k], RED, 13);
            s += line(837, y + .5, 842, y + .5, LINE);
            s += line(837, y + 14.5, 840, y + 14.5, LINE);
        });
        s += vgrid(598, 748);
        volTop.forEach((t, i) => {
            const x = X(i);
            if (volUp[i]) s += `<rect x="${x - 2.5}" y="${t + .5}" width="6" height="${748 - t}" fill="#000" stroke="${RED}" shape-rendering="crispEdges"/>`;
            else s += `<rect x="${x - 3}" y="${t}" width="7" height="${749 - t}" fill="${CYAN}" shape-rendering="crispEdges"/>`;
        });
        s += poly(series(volMa5), '#ffff00') + poly(series(volMa10), '#ff00ff');
        s += line(666.5, 595, 666.5, 685, '#ffff00', 'stroke-width="2"');
        s += `<path d="M662 681V685H671V681" fill="none" stroke="#ffff00"/><rect x="663" y="685" width="7" height="6" fill="#fff"/>`;
        s += line(20, 749.5, 888, 749.5, LINE) + line(836.5, 579, 836.5, 750, LINE) + line(837, 580.5, 888, 580.5, LINE) + line(887, 579, 887, 750, LINE, 'stroke-width="2"');
        document.getElementById('amo').innerHTML = s;

        // macd panel
        const steps = pts => pts.flatMap((p, i) => i ? [[p[0], pts[i - 1][1]], p] : [p]);
        s = line(20, 778.5, 836, 778.5, DOT, 'stroke-dasharray="2 2"');
        s += vgrid(770, 795);
        macdBars.forEach((h, i) => {
            if (h) s += line(X(i) + .5, 778, X(i) + .5, 778 - h, h > 0 ? RED : CYAN);
        });
        s += poly(steps(macdWhite), '#ffffff', 2) + poly(steps(macdYellow), '#ffff00', 1);
        s += line(20, 794.5, 888, 794.5, LINE) + line(836.5, 750, 836.5, 795, LINE) + line(887.5, 750, 887.5, 795, LINE);
        [125, 167, 211, 258, 306, 360, 412, 509, 553, 610].forEach(x => { s += line(x, 792, x, 795, LINE); });
        document.getElementById('macd').innerHTML = s;

        // order book
        const G = 'text-[#00e600]', Y = 'text-[#c8c800]', W = 'text-white', R = 'text-[#ff3232]', Gy = 'text-[#c0c0c0]';
        const row = (a, av, ac, b, bv, bc) => `<div class="h-[19px] flex items-center pl-[2px]"><span class="w-[32px] shrink-0 text-[16px] whitespace-nowrap">${a}</span><b class="w-[75px] shrink-0 text-right text-[13px] tracking-[.5px] whitespace-nowrap ${ac}">${av}</b><span class="ml-[5px] w-[32px] shrink-0 text-[16px] whitespace-nowrap">${b}</span><b class="w-[75px] shrink-0 text-right text-[13px] tracking-[.5px] whitespace-nowrap ${bc}">${bv}</b></div>`;
        const quote = (a, av, v) => `<div class="h-[19px] flex items-center pl-[2px]"><span class="w-[32px] shrink-0 text-[16px] whitespace-nowrap">${a}</span><b class="w-[75px] shrink-0 text-right text-[13px] tracking-[.5px] ${G}">${av}</b><b class="w-[112px] shrink-0 text-right text-[13px] tracking-[.5px] ${Y}">${v}</b></div>`;
        const block = (inner, h) => `<div class="${h} shrink-0 pt-px border-b border-[#c00000]">${inner}</div>`;
        document.getElementById('book').innerHTML =
            block([['卖五', '7.06', 200], ['卖四', '7.05', 748], ['卖三', '7.04', 1169], ['卖二', '7.03', 1684], ['卖一', '7.02', 3071]].map(r => quote(...r)).join(''), 'h-[97px]') +
            block([['买一', '7.01', 3421], ['买二', '7.00', 1447], ['买三', '6.99', 939], ['买四', '6.98', 875], ['买五', '6.97', 1562]].map(r => quote(...r)).join(''), 'h-[97px]') +
            block(row('现价', '7.01', G, '今开', '7.09', W) + row('涨跌', '-0.08', G, '最高', '7.09', W) + row('涨幅', '-1.13%', G, '最低', '6.88', G) + row('总量', '277607', Y, '量比', '0.89', G) + row('外盘', '121354', R, '内盘', '156252', G), 'h-[97px]') +
            block(row('换手', '1.62%', Gy, '股本', '25.4亿', Gy) + row('净资', '2.98', Gy, '流通', '17.1亿', Gy) + row('<span class="text-[13px]">收益(三)</span>', '0.372', Gy, '<span class="text-[13px]">PE(动)</span>', '14.1', Gy), 'h-[62px]');

        // tick list
        const ticks = [
            ['14:55', '6.99', 152, 'B', 7, 0], ['', '6.99', 187, 'B', 9, 0], ['', '6.99', 7, 'S', 2, 0],
            ['14:56', '6.99', 443, 'S', 2, 1], ['', '7.00', 2577, 'B', 43, 1], ['', '7.00', 310, 'S', 2, 1], ['', '7.00', 115, 'S', 2, 0], ['', '7.01', 1052, 'B', 14, 1],
            ['', '7.01', 105, 'B', 6, 0], ['', '7.00', 109, 'S', 6, 0], ['', '7.01', 106, 'B', 6, 0], ['', '7.00', 57, 'S', 5, 0], ['', '7.00', 47, 'S', 4, 0],
            ['', '7.00', 1333, 'S', 9, 1], ['', '7.00', 285, 'S', 6, 0], ['', '7.00', 565, 'S', 19, 1], ['', '7.00', 143, 'S', 12, 0], ['', '7.00', 139, 'S', 7, 0], ['', '7.00', 282, 'B', 8, 0],
            ['14:57', '7.00', 12, 'S', 2, 0], ['', '7.01', 186, 'B', 3, 0],
            ['15:00', '7.01', 6804, '', 145, 1]
        ];
        document.getElementById('ticks').innerHTML = ticks.map((t, i) => {
            const sep = t[0] && i ? 'border-t border-dotted border-[#c00000]' : '';
            return `<div class="h-[18px] shrink-0 flex items-center font-bold text-[13px] tracking-[.5px] ${sep}">
                <span class="w-[36px] pl-[1px] text-[#c0c0c0]">${t[0]}</span>
                <span class="w-[69px] text-right text-[#00e600]">${t[1]}</span>
                <span class="w-[64px] text-right ${t[5] ? 'text-[#c000c0]' : 'text-[#c8c800]'}">${t[2]}</span>
                <span class="w-[29px] text-center ${t[3] === 'B' ? 'text-[#ff3232]' : 'text-[#00e600]'}">${t[3]}</span>
                <span class="w-[22px] text-right text-[#808080]">${t[4]}</span>
            </div>`;
        }).join('');
    </script>
</body>

</html>
